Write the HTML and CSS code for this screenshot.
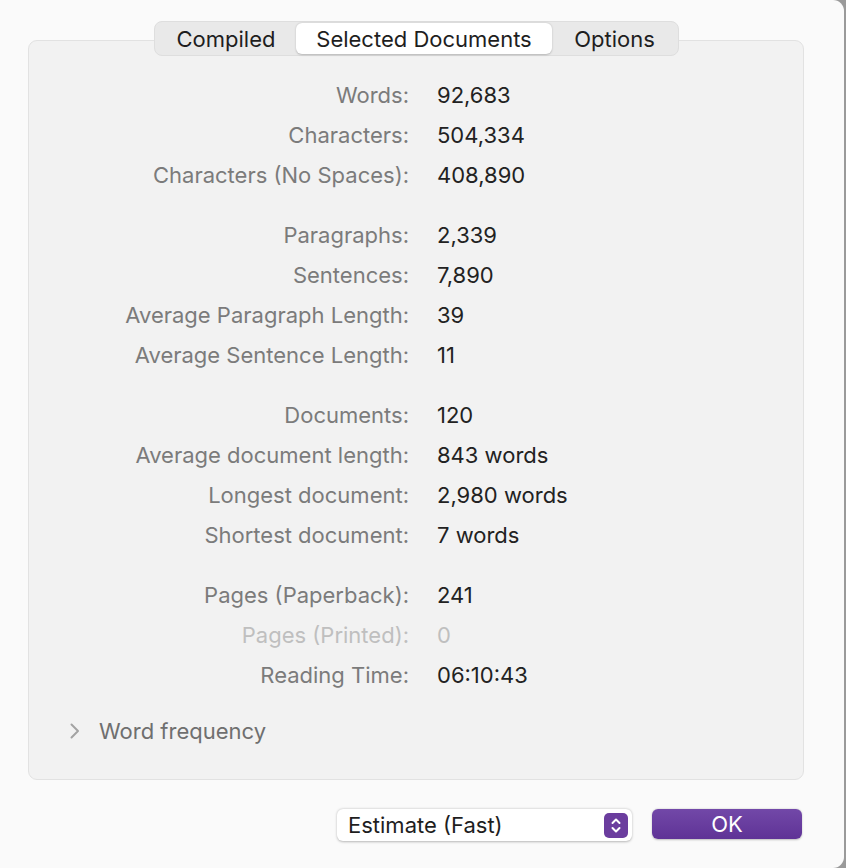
FILE: index.html
```html
<!DOCTYPE html>
<html>
<head>
<meta charset="utf-8">
<link rel="stylesheet" href="styles.css">
</head>
<body>
<div class="window">
  <div class="tabs">
    <div class="seg">
      <div class="tab t1">Compiled</div>
      <div class="tab t2 active">Selected Documents</div>
      <div class="tab t3">Options</div>
    </div>
  </div>
  <div class="group">
    <div class="stats">
      <div class="sec">
        <div class="lbl">Words:</div><div class="val">92,683</div>
        <div class="lbl">Characters:</div><div class="val">504,334</div>
        <div class="lbl">Characters (No Spaces):</div><div class="val">408,890</div>
      </div>
      <div class="sec">
        <div class="lbl">Paragraphs:</div><div class="val">2,339</div>
        <div class="lbl">Sentences:</div><div class="val">7,890</div>
        <div class="lbl">Average Paragraph Length:</div><div class="val">39</div>
        <div class="lbl">Average Sentence Length:</div><div class="val">11</div>
      </div>
      <div class="sec">
        <div class="lbl">Documents:</div><div class="val">120</div>
        <div class="lbl">Average document length:</div><div class="val">843 words</div>
        <div class="lbl">Longest document:</div><div class="val">2,980 words</div>
        <div class="lbl">Shortest document:</div><div class="val">7 words</div>
      </div>
      <div class="sec">
        <div class="lbl">Pages (Paperback):</div><div class="val">241</div>
        <div class="lbl dis">Pages (Printed):</div><div class="val dis">0</div>
        <div class="lbl">Reading Time:</div><div class="val">06:10:43</div>
      </div>
    </div>
    <div class="disclosure">
      <svg class="chev" width="12" height="18" viewBox="0 0 12 18"><path d="M2.5 2.5 L9 9 L2.5 15.5" fill="none" stroke="#a3a3a3" stroke-width="2" stroke-linecap="round" stroke-linejoin="round"/></svg>
      <span>Word frequency</span>
    </div>
  </div>
  <div class="footer">
    <div class="popup">
      <span>Estimate (Fast)</span>
      <div class="stepper">
        <svg width="24" height="25" viewBox="0 0 24 25"><path d="M8.5 10 L12 6.5 L15.5 10 M8.5 15 L12 18.5 L15.5 15" fill="none" stroke="#fff" stroke-width="2" stroke-linecap="round" stroke-linejoin="round"/></svg>
      </div>
    </div>
    <div class="ok">OK</div>
  </div>
</div>
</body>
</html>
```

FILE: styles.css
```css
html, body {
  margin: 0;
  padding: 0;
}
body {
  width: 846px;
  height: 868px;
  background: #9a9a9a;
  font-family: Inter, "Noto Sans", "Liberation Sans", sans-serif;
  overflow: hidden;
}
.window {
  width: 844px;
  height: 868px;
  background: #fafafa;
  border-top-right-radius: 11px;
  border-bottom-right-radius: 11px;
  display: flex;
  flex-direction: column;
  padding-top: 21px;
  box-sizing: border-box;
}
.tabs {
  display: flex;
  padding-left: 154px;
  position: relative;
  z-index: 1;
}
.seg {
  display: flex;
  background: #e9e9e9;
  border: 1px solid #dedede;
  border-radius: 8px;
  padding: 1px;
  height: 31px;
}
.tab {
  display: flex;
  align-items: center;
  justify-content: center;
  font-size: 22px;
  color: #1e1e1e;
  height: 32px;
}
.t1 { width: 140px; }
.t2 { width: 256px; }
.t3 { width: 125px; }
.tab.active {
  height: 31px;
  background: #ffffff;
  border-radius: 6px;
  box-shadow: 0 0.5px 2px rgba(0,0,0,0.22);
}
.group {
  margin-top: -16px;
  margin-left: 28px;
  width: 776px;
  height: 740px;
  box-sizing: border-box;
  background: #f2f2f2;
  border: 1px solid #e2e2e2;
  border-radius: 9px;
  padding-top: 34px;
}
.stats {
  display: flex;
  flex-direction: column;
  gap: 20px;
}
.sec {
  display: grid;
  grid-template-columns: 380px auto;
  column-gap: 28px;
  grid-auto-rows: 40px;
}
.lbl, .val {
  font-size: 22px;
  display: flex;
  align-items: center;
}
.lbl {
  justify-content: flex-end;
  color: #7b7b7b;
}
.val {
  color: #222222;
}
.lbl.dis, .val.dis {
  color: #bfbfbf;
}
.disclosure {
  margin-top: 16px;
  height: 40px;
  display: flex;
  align-items: center;
  padding-left: 40px;
  gap: 18px;
  font-size: 22px;
  color: #6f6f6f;
}
.footer {
  display: flex;
  align-items: flex-start;
  margin-top: 29px;
  padding-left: 337px;
  gap: 20px;
}
.popup {
  width: 295px;
  height: 32px;
  box-sizing: border-box;
  background: #ffffff;
  border-radius: 6px;
  box-shadow: 0 0.5px 2.5px rgba(0,0,0,0.28);
  display: flex;
  align-items: center;
  justify-content: space-between;
  padding-left: 11px;
  padding-right: 4px;
  font-size: 22px;
  color: #1e1e1e;
}
.stepper {
  width: 24px;
  height: 25px;
  background: #6b3d9e;
  border-radius: 5px;
  display: flex;
}
.ok {
  width: 150px;
  height: 30px;
  border-radius: 6px;
  background: linear-gradient(#7248a8, #5f3396);
  box-shadow: 0 0.5px 2px rgba(0,0,0,0.25);
  color: #ffffff;
  font-size: 22px;
  display: flex;
  align-items: center;
  justify-content: center;
}
```
